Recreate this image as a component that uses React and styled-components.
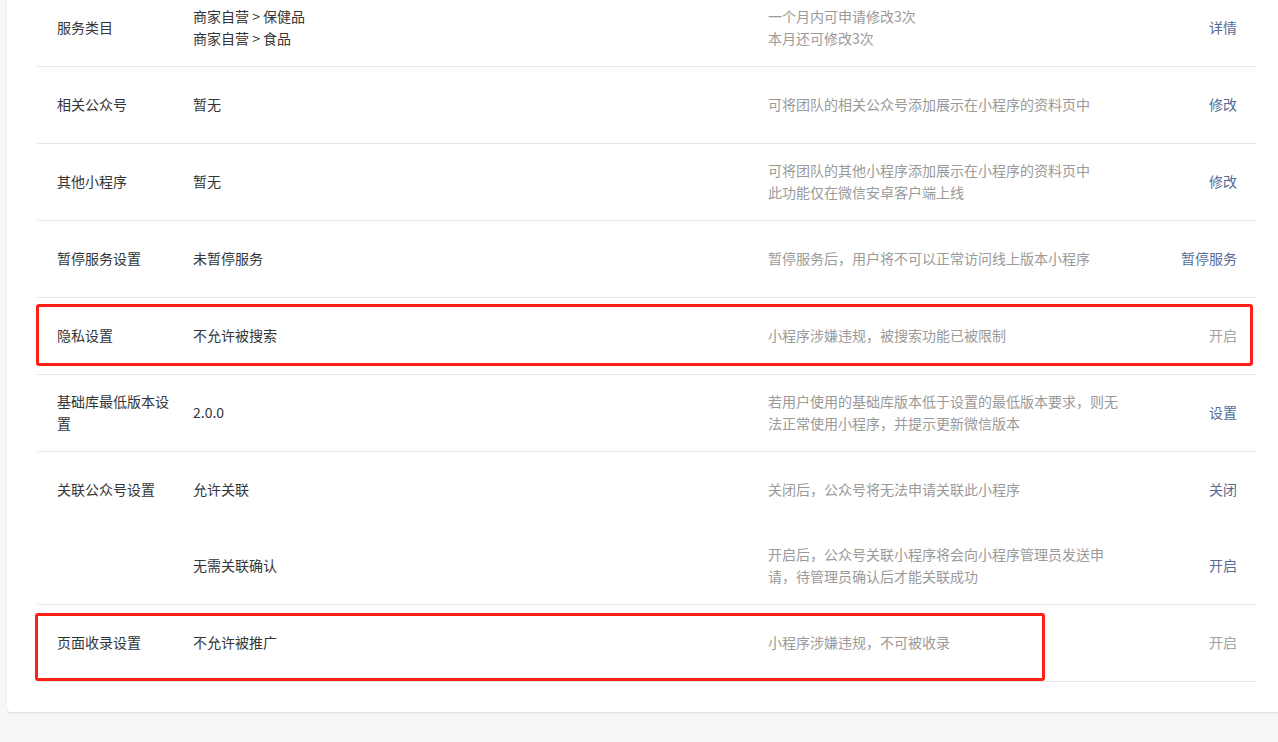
import React from "react";
import styled, { createGlobalStyle } from "styled-components";

const Global = createGlobalStyle`
  html, body { margin: 0; padding: 0; background: #f6f7f9; overflow: hidden; }
  body { font-family: "Noto Sans CJK SC", "Noto Sans", sans-serif; font-size: 14px; }
`;

const Page = styled.div`
  min-height: 742px;
  padding-left: 7px;
  overflow: hidden;
`;

const Card = styled.div`
  width: 1280px;
  margin-top: -10px;
  padding: 0 30px 30px 30px;
  background: #fff;
  border-radius: 0 0 4px 4px;
  box-shadow: 0 1px 2px rgba(0, 0, 0, 0.12);
  box-sizing: border-box;
`;

const Row = styled.div`
  position: relative;
  display: grid;
  grid-template-columns: 112px 551px 360px 1fr;
  column-gap: 24px;
  grid-auto-rows: 76px;
  align-items: center;
  padding: 0 20px;
  border-bottom: 1px solid #e7e7eb;
  line-height: 22px;
`;

const Cell = styled.div`
  margin-top: -2px;
`;

const Label = styled(Cell)`
  color: #353535;
`;

const Value = styled(Cell)`
  color: #353535;
`;

const Desc = styled(Cell)`
  color: #9a9a9a;
`;

const Action = styled.a`
  justify-self: end;
  margin-top: -2px;
  color: ${(p) => (p.$disabled ? "#a3a3a3" : "#576b95")};
  text-decoration: none;
  cursor: ${(p) => (p.$disabled ? "default" : "pointer")};
  white-space: nowrap;
`;

const Highlight = styled.div`
  position: absolute;
  top: ${(p) => p.$top}px;
  bottom: ${(p) => p.$bottom}px;
  left: ${(p) => p.$left}px;
  right: ${(p) => p.$right}px;
  border: 3px solid #ff2015;
  border-radius: 3px;
  pointer-events: none;
`;

const rows = [
  {
    label: "服务类目",
    items: [
      {
        value: ["商家自营 > 保健品", "商家自营 > 食品"],
        desc: ["一个月内可申请修改3次", "本月还可修改3次"],
        action: "详情",
      },
    ],
  },
  {
    label: "相关公众号",
    items: [{ value: ["暂无"], desc: ["可将团队的相关公众号添加展示在小程序的资料页中"], action: "修改" }],
  },
  {
    label: "其他小程序",
    items: [
      {
        value: ["暂无"],
        desc: ["可将团队的其他小程序添加展示在小程序的资料页中", "此功能仅在微信安卓客户端上线"],
        action: "修改",
      },
    ],
  },
  {
    label: "暂停服务设置",
    items: [{ value: ["未暂停服务"], desc: ["暂停服务后，用户将不可以正常访问线上版本小程序"], action: "暂停服务" }],
  },
  {
    label: "隐私设置",
    items: [{ value: ["不允许被搜索"], desc: ["小程序涉嫌违规，被搜索功能已被限制"], action: "开启", disabled: true }],
    highlight: { top: 6, bottom: 8, left: -1, right: 4 },
  },
  {
    label: "基础库最低版本设置",
    items: [
      {
        value: ["2.0.0"],
        desc: ["若用户使用的基础库版本低于设置的最低版本要求，则无法正常使用小程序，并提示更新微信版本"],
        action: "设置",
      },
    ],
  },
  {
    label: "关联公众号设置",
    items: [
      { value: ["允许关联"], desc: ["关闭后，公众号将无法申请关联此小程序"], action: "关闭" },
      {
        value: ["无需关联确认"],
        desc: ["开启后，公众号关联小程序将会向小程序管理员发送申请，待管理员确认后才能关联成功"],
        action: "开启",
      },
    ],
  },
  {
    label: "页面收录设置",
    items: [{ value: ["不允许被推广"], desc: ["小程序涉嫌违规，不可被收录"], action: "开启", disabled: true }],
    highlight: { top: 8, bottom: 0, left: -2, right: 212 },
  },
];

const Lines = ({ lines }) =>
  lines.map((l, i) => <div key={i}>{l}</div>);

export default function App() {
  return (
    <>
      <Global />
      <Page>
        <Card>
          {rows.map((r) => (
            <Row key={r.label}>
              {r.items.map((it, i) => (
                <React.Fragment key={i}>
                  <Label>{i === 0 ? r.label : ""}</Label>
                  <Value>
                    <Lines lines={it.value} />
                  </Value>
                  <Desc>
                    <Lines lines={it.desc} />
                  </Desc>
                  <Action $disabled={it.disabled}>{it.action}</Action>
                </React.Fragment>
              ))}
              {r.highlight && (
                <Highlight
                  $top={r.highlight.top}
                  $bottom={r.highlight.bottom}
                  $left={r.highlight.left}
                  $right={r.highlight.right}
                />
              )}
            </Row>
          ))}
        </Card>
      </Page>
    </>
  );
}
